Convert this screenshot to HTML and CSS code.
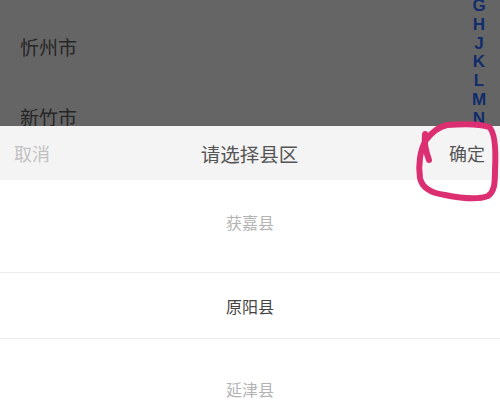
FILE: index.html
```html
<!DOCTYPE html>
<html lang="zh-CN">
<head>
    <meta charset="UTF-8">
    <meta name="viewport" content="width=device-width, initial-scale=1.0">
    <title>请选择县区</title>
    <link rel="stylesheet" href="styles.css">
</head>
<body>

    <div class="screen">
        <div class="cities">
            <ul class="city-list">
                <li class="city">忻州市</li>
                <li class="city">新竹市</li>
            </ul>
            <div class="index-bar">
                <span>G</span>
                <span>H</span>
                <span>J</span>
                <span>K</span>
                <span>L</span>
                <span>M</span>
                <span>N</span>
            </div>
        </div>

        <div class="sheet">
            <div class="sheet-head">
                <span class="btn cancel">取消</span>
                <span class="sheet-title">请选择县区</span>
                <span class="btn ok">确定</span>
            </div>
            <div class="picker">
                <div class="option">获嘉县</div>
                <div class="option selected">原阳县</div>
                <div class="option">延津县</div>
            </div>
        </div>

        <!-- hand drawn mark round the confirm button -->
        <svg class="mark" width="100" height="100" viewBox="0 0 100 100">
            <path d="M25 24 C 24 32, 26 42, 29 50" />
            <path d="M47 15 C 60 14, 78 13, 89 17 C 95 22, 96 40, 95 60 C 95 75, 94 82, 88 86 C 78 90, 60 88, 45 85 C 30 83, 22 78, 20 68 C 18 55, 20 40, 26 30 C 32 22, 38 17, 47 15 Z" />
        </svg>
    </div>

</body>
</html>
```

FILE: styles.css
```css
body {
    margin: 0;
    padding: 0;
    font-family: "Noto Sans CJK SC", "Noto Sans", sans-serif;
    background-color: #ffffff;
}

.screen {
    position: relative;
    width: 500px;
    height: 400px;
    overflow: hidden;
}

.cities {
    display: flex;
    height: 126px;
    overflow: hidden;
    background-color: #656565;
}

.city-list {
    flex: 1;
    list-style: none;
    margin: 0;
    padding: 12px 0 0 20px;
}

.city {
    height: 70px;
    line-height: 70px;
    font-size: 19px;
    color: #262626;
}

.index-bar {
    display: flex;
    flex-direction: column;
    align-items: center;
    width: 30px;
    margin: -3px 6px 0 0;
    font-family: "Liberation Sans", Arial, sans-serif;
    font-weight: bold;
    font-size: 17px;
    line-height: 18.8px;
    color: #112c6c;
}

.sheet-head {
    display: flex;
    justify-content: space-between;
    align-items: center;
    height: 54px;
    padding: 0 15px 0 14px;
    background-color: #f4f4f4;
}

.btn {
    font-size: 18px;
    width: 60px;
}

.cancel {
    color: #c2c2c2;
}

.ok {
    color: #555555;
    text-align: right;
}

.sheet-title {
    font-size: 19.5px;
    color: #555555;
}

.picker {
    display: flex;
    flex-direction: column;
    background-color: #ffffff;
}

.option {
    display: flex;
    justify-content: center;
    align-items: center;
    height: 84px;
    font-size: 16px;
    color: #b3b3b3;
}

.option.selected {
    height: 65px;
    margin: 8px 0;
    border-top: 1px solid #ececec;
    border-bottom: 1px solid #ececec;
    color: #444444;
}

.mark {
    position: absolute;
    left: 400px;
    top: 110px;
}

.mark path {
    fill: none;
    stroke: #dc2f72;
    stroke-width: 6;
    stroke-linecap: round;
    stroke-linejoin: round;
}
```
